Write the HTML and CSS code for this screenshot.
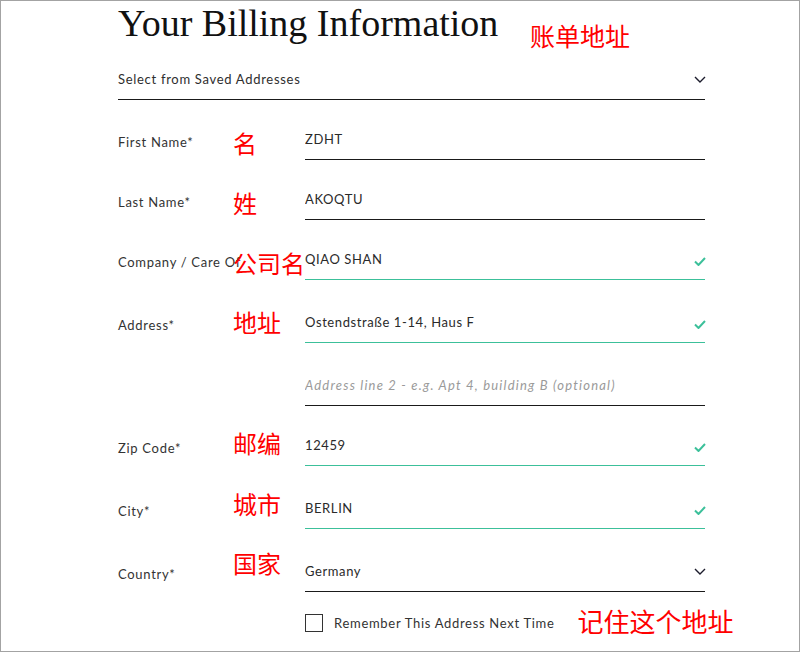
FILE: index.html
```html
<!DOCTYPE html>
<html lang="en">
  <head>
    <meta charset="UTF-8" />
    <meta name="viewport" content="width=device-width, initial-scale=1.0" />
    <title>Billing Information</title>
    <link rel="stylesheet" href="styles.css">
  </head>

  <body>
    <div class="page">
      <header class="billing-head">
        <h1 class="title">Your Billing Information</h1>
        <span class="note note--head">账单地址</span>
      </header>

      <div class="saved">
        <span>Select from Saved Addresses</span>
        <svg class="chevron" width="12" height="7" viewBox="0 0 12 7">
          <path d="M1 1l5 5 5-5" fill="none" stroke="#1c1c2c" stroke-width="1.4" />
        </svg>
      </div>

      <form class="form">
        <div class="row">
          <label class="label">First Name*</label>
          <span class="note note--first">名</span>
          <div class="field">
            <input class="input" type="text" value="ZDHT" />
          </div>
        </div>

        <div class="row">
          <label class="label">Last Name*</label>
          <span class="note note--first">姓</span>
          <div class="field">
            <input class="input" type="text" value="AKOQTU" />
          </div>
        </div>

        <div class="row">
          <label class="label">Company / Care Of</label>
          <span class="note note--first">公司名</span>
          <div class="field field--valid">
            <input class="input" type="text" value="QIAO SHAN" />
            <svg class="check" width="12" height="9" viewBox="0 0 12 9">
              <path d="M1 4.5l3.5 3.5 6.5-7" fill="none" stroke="#3cc09a" stroke-width="2" />
            </svg>
          </div>
        </div>

        <div class="row row--wide">
          <label class="label">Address*</label>
          <span class="note note--address">地址</span>
          <div class="field field--valid">
            <input class="input" type="text" value="Ostendstraße 1-14, Haus F" />
            <svg class="check" width="12" height="9" viewBox="0 0 12 9">
              <path d="M1 4.5l3.5 3.5 6.5-7" fill="none" stroke="#3cc09a" stroke-width="2" />
            </svg>
          </div>
        </div>

        <div class="row row--wide">
          <span class="label"></span>
          <span class="note"></span>
          <div class="field">
            <input class="input" type="text" placeholder="Address line 2 - e.g. Apt 4, building B (optional)" />
          </div>
        </div>

        <div class="row">
          <label class="label">Zip Code*</label>
          <span class="note note--zip">邮编</span>
          <div class="field field--valid">
            <input class="input" type="text" value="12459" />
            <svg class="check" width="12" height="9" viewBox="0 0 12 9">
              <path d="M1 4.5l3.5 3.5 6.5-7" fill="none" stroke="#3cc09a" stroke-width="2" />
            </svg>
          </div>
        </div>

        <div class="row row--wide">
          <label class="label">City*</label>
          <span class="note note--city">城市</span>
          <div class="field field--valid">
            <input class="input" type="text" value="BERLIN" />
            <svg class="check" width="12" height="9" viewBox="0 0 12 9">
              <path d="M1 4.5l3.5 3.5 6.5-7" fill="none" stroke="#3cc09a" stroke-width="2" />
            </svg>
          </div>
        </div>

        <div class="row row--wide">
          <label class="label">Country*</label>
          <span class="note note--country">国家</span>
          <div class="field field--select">
            <span class="input">Germany</span>
            <svg class="chevron" width="12" height="7" viewBox="0 0 12 7">
              <path d="M1 1l5 5 5-5" fill="none" stroke="#1c1c2c" stroke-width="1.4" />
            </svg>
          </div>
        </div>

        <div class="row row--remember">
          <span class="label"></span>
          <span class="note"></span>
          <div class="remember">
            <label class="remember-box">
              <span class="box"></span>
              Remember This Address Next Time
            </label>
            <span class="note note--remember">记住这个地址</span>
          </div>
        </div>
      </form>
    </div>
  </body>
</html>
```

FILE: styles.css
```css
body {
  margin: 0;
  font-family: Lato, "Open Sans", sans-serif;
  color: #2e2e2e;
  background: #fff;
}

.page {
  box-sizing: border-box;
  width: 800px;
  height: 652px;
  border: 1px solid #a3a3a3;
  padding-left: 117px;
  overflow: hidden;
}

.billing-head {
  display: flex;
  align-items: flex-start;
  height: 44px;
}

.title {
  width: 412px;
  flex-shrink: 0;
  margin: 0;
  font-family: "Liberation Serif", serif;
  font-weight: normal;
  font-size: 38px;
  line-height: 44px;
  color: #111;
}

.note {
  font-family: "Noto Sans CJK SC", sans-serif;
  font-size: 24px;
  line-height: 24px;
  color: #ff0000;
  white-space: nowrap;
}

.note--head {
  font-size: 25px;
  line-height: 25px;
  margin-top: 22px;
}

.saved {
  width: 587px;
  display: flex;
  justify-content: space-between;
  align-items: center;
  padding: 24px 0 10px;
  border-bottom: 1px solid #1a1a1a;
  font-size: 13px;
  line-height: 20px;
  letter-spacing: 0.7px;
}

.chevron {
  margin-right: -1px;
}

.form {
  width: 587px;
}

.row {
  display: grid;
  grid-template-columns: 115px 72px 400px;
  margin-top: 29px;
}

.row--wide {
  margin-top: 32px;
}

.row--remember {
  margin-top: 19px;
}

.label {
  padding-top: 3px;
  font-size: 13px;
  line-height: 20px;
  letter-spacing: 0.7px;
  white-space: nowrap;
  color: #333;
}

.note--first {
  margin-top: 2px;
}

.note--address {
  margin-top: -2px;
}

.note--zip {
  margin-top: -4px;
}

.note--city {
  margin-top: -6px;
}

.note--country {
  margin-top: -10px;
}

.field {
  display: flex;
  align-items: flex-start;
  justify-content: space-between;
  padding-bottom: 10px;
  border-bottom: 1px solid #1a1a1a;
}

.field--valid {
  border-bottom-color: #3cc09a;
}

.input {
  flex: 1;
  min-width: 0;
  height: 20px;
  padding: 0;
  border: none;
  outline: none;
  background: transparent;
  font-family: inherit;
  font-size: 13px;
  line-height: 20px;
  letter-spacing: 0.6px;
  color: #2a2a2a;
}

.input::placeholder {
  font-style: italic;
  letter-spacing: 1.2px;
  color: #9a9a9a;
}

.check {
  margin-top: 8px;
  margin-right: -1px;
}

.field--select .chevron {
  margin-top: 7px;
}

.remember {
  display: flex;
  align-items: center;
}

.remember-box {
  display: flex;
  align-items: center;
  flex-shrink: 0;
  gap: 11px;
  white-space: nowrap;
  font-size: 13px;
  line-height: 20px;
  letter-spacing: 0.7px;
  color: #333;
}

.box {
  width: 16px;
  height: 16px;
  border: 1px solid #333;
}

.remember .note--remember {
  margin-left: 23px;
  font-size: 26px;
  line-height: 26px;
  margin-top: -3px;
}
```
